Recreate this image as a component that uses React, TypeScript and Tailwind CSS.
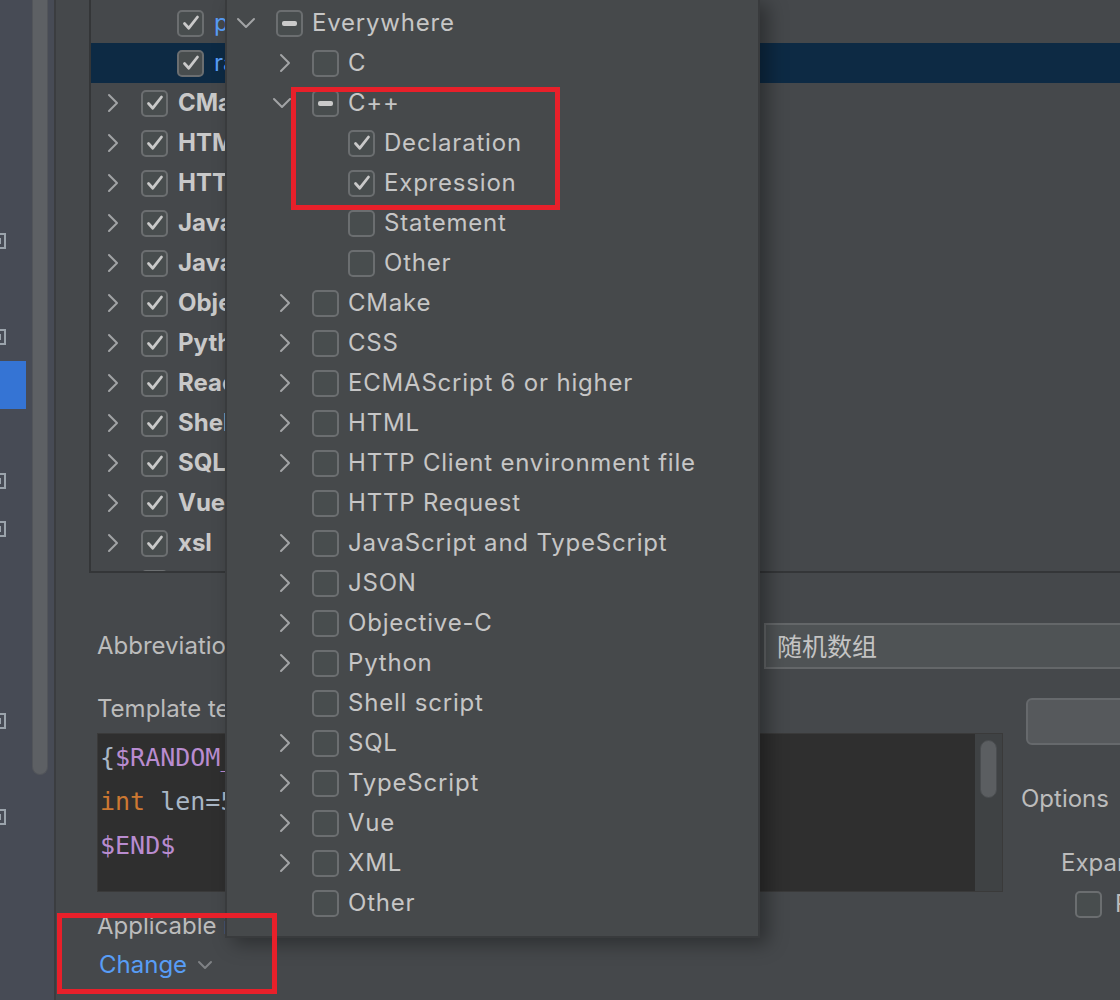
import React from "react";

type Check = "on" | "off" | "mixed";

interface PopupRow {
  label: string;
  level: number;
  arrow?: "right" | "down";
  state: Check;
}

const popupRows: PopupRow[] = [
  { label: "Everywhere", level: 0, arrow: "down", state: "mixed" },
  { label: "C", level: 1, arrow: "right", state: "off" },
  { label: "C++", level: 1, arrow: "down", state: "mixed" },
  { label: "Declaration", level: 2, state: "on" },
  { label: "Expression", level: 2, state: "on" },
  { label: "Statement", level: 2, state: "off" },
  { label: "Other", level: 2, state: "off" },
  { label: "CMake", level: 1, arrow: "right", state: "off" },
  { label: "CSS", level: 1, arrow: "right", state: "off" },
  { label: "ECMAScript 6 or higher", level: 1, arrow: "right", state: "off" },
  { label: "HTML", level: 1, arrow: "right", state: "off" },
  { label: "HTTP Client environment file", level: 1, arrow: "right", state: "off" },
  { label: "HTTP Request", level: 1, state: "off" },
  { label: "JavaScript and TypeScript", level: 1, arrow: "right", state: "off" },
  { label: "JSON", level: 1, arrow: "right", state: "off" },
  { label: "Objective-C", level: 1, arrow: "right", state: "off" },
  { label: "Python", level: 1, arrow: "right", state: "off" },
  { label: "Shell script", level: 1, state: "off" },
  { label: "SQL", level: 1, arrow: "right", state: "off" },
  { label: "TypeScript", level: 1, arrow: "right", state: "off" },
  { label: "Vue", level: 1, arrow: "right", state: "off" },
  { label: "XML", level: 1, arrow: "right", state: "off" },
  { label: "Other", level: 1, state: "off" },
];

const groups = [
  "CMake",
  "HTML",
  "HTTP Request",
  "JavaScript",
  "Java",
  "Objective-C",
  "Python",
  "React",
  "Shell Script",
  "SQL",
  "Vue",
  "xsl",
  "Zen CSS",
];

const sideIcons = [5, 7, 10, 11, 15, 17];

function ChevronRight() {
  return (
    <svg width="12" height="20" viewBox="0 0 12 20" fill="none">
      <path d="M2 2l8 8-8 8" stroke="#a2a4a6" strokeWidth="2" strokeLinecap="round" strokeLinejoin="round" />
    </svg>
  );
}

function ChevronDown() {
  return (
    <svg width="20" height="12" viewBox="0 0 20 12" fill="none">
      <path d="M2 2l8 8 8-8" stroke="#a2a4a6" strokeWidth="2" strokeLinecap="round" strokeLinejoin="round" />
    </svg>
  );
}

function Checkbox({ state }: { state: Check }) {
  return (
    <div className="w-[27px] h-[27px] shrink-0 rounded-[5px] border-2 border-[#6b6e70] bg-[#484d4e] flex items-center justify-center">
      {state === "on" && (
        <svg width="20" height="20" viewBox="0 0 20 20" fill="none">
          <path d="M3.5 10.5l4.3 4.7L16.5 4" stroke="#c9c9c9" strokeWidth="2.8" strokeLinecap="round" strokeLinejoin="round" />
        </svg>
      )}
      {state === "mixed" && <div className="w-[15px] h-[5px] rounded-[2px] bg-[#cacaca]" />}
    </div>
  );
}

function SideBar() {
  return (
    <div className="w-[56px] h-full shrink-0 flex bg-[#474b55] border-r-2 border-[#3b3d40]">
      <div className="w-[32px] flex flex-col -mt-[23px]">
        {Array.from({ length: 21 }).map((_, i) => (
          <div
            key={i}
            className={
              i === 8
                ? "h-[48px] w-[26px] shrink-0 bg-[#3574d4]"
                : "h-[48px] shrink-0 flex items-center"
            }
          >
            {sideIcons.includes(i) && (
              <div className="w-[16px] h-[16px] -ml-[10px] border-2 border-[#9ba3ab] flex items-center justify-center">
                <div className="w-[6px] h-[6px] bg-[#9ba3ab]" />
              </div>
            )}
          </div>
        ))}
      </div>
      <div className="w-[16px] h-[775px] rounded-b-full bg-[#5d6064] border-b border-x border-[#52555a]" />
    </div>
  );
}

function TreeBox() {
  return (
    <div className="ml-[33px] h-[573px] border-l-2 border-b-2 border-[#343638] pt-[3px] overflow-hidden font-['Inter',sans-serif] text-[24px]">
      <div className="h-[40px] flex items-center pl-[86px] gap-[10px]">
        <Checkbox state="on" />
        <span className="text-[#589df6]">p</span>
      </div>
      <div className="h-[40px] flex items-center pl-[86px] gap-[10px] bg-[#0d2a44]">
        <Checkbox state="on" />
        <span className="text-[#589df6]">ra</span>
      </div>
      {groups.map((g) => (
        <div key={g} className="h-[40px] flex items-center pl-[16px]">
          <ChevronRight />
          <div className="ml-[22px]">
            <Checkbox state="on" />
          </div>
          <span className="ml-[10px] font-bold text-[#c9c9c9]">{g}</span>
        </div>
      ))}
    </div>
  );
}

function Popup() {
  return (
    <div className="absolute left-[225px] -top-[2px] w-[535px] h-[940px] bg-[#46494b] border-2 border-[#393b3d] shadow-[8px_6px_18px_rgba(0,0,0,0.35)] pt-[3px] font-['Inter',sans-serif] text-[24px] text-[#c6c6c6] tracking-[0.8px]">
      {popupRows.map((r, i) => (
        <div key={i} className="h-[40px] flex items-center" style={{ paddingLeft: 9 + r.level * 36 }}>
          <div className="w-[40px] flex items-center justify-start">
            {r.arrow === "right" && <div className="ml-[7px]"><ChevronRight /></div>}
            {r.arrow === "down" && <ChevronDown />}
          </div>
          <Checkbox state={r.state} />
          <span className="ml-[9px] whitespace-nowrap">{r.label}</span>
        </div>
      ))}
    </div>
  );
}

function Editor() {
  return (
    <div className="h-[159px] w-[906px] flex bg-[#2f2f2f] border border-[#3a3a3a]">
      <div className="flex-1 pl-[2px] pt-[2px] font-['DejaVu_Sans_Mono',monospace] text-[25px] leading-[44px] text-[#a9b7c6]">
        <div>
          {"{"}
          <span className="text-[#b98cd0]">$RANDOM_ARRAY$</span>
          {"}"}
        </div>
        <div>
          <span className="text-[#cc7832]">int</span> len=5;
        </div>
        <div className="text-[#b98cd0]">$END$</div>
      </div>
      <div className="w-[27px] bg-[#3f4244] pt-[6px] flex justify-center">
        <div className="w-[17px] h-[58px] rounded-full bg-[#5b5e61] border border-[#4a4d50]" />
      </div>
    </div>
  );
}

export default function App() {
  return (
    <div className="relative w-[1120px] h-[1000px] overflow-hidden flex bg-[#45484b]">
      <SideBar />
      <div className="flex-1 min-w-0 overflow-hidden font-['Inter',sans-serif] text-[24px] text-[#bcbcbc]">
        <TreeBox />
        <div className="pl-[41px] pt-[50px]">
          <div className="flex items-center h-[46px]">
            <span className="w-[667px] shrink-0">Abbreviation:</span>
            <div className="h-[46px] w-[500px] shrink-0 bg-[#4f5355] border-2 border-[#646769] flex items-center pl-[11px] font-['Noto_Sans_CJK_SC',sans-serif] text-[25px] text-[#c4c4c4]">
              随机数组
            </div>
          </div>
          <div className="flex">
            <div className="w-[906px] shrink-0">
              <div className="h-[24px] leading-[24px] mt-[28px]">Template text:</div>
              <div className="mt-[12px]">
                <Editor />
              </div>
              <div className="h-[24px] leading-[24px] mt-[22px]">Applicable in C++.</div>
              <div className="h-[24px] leading-[24px] mt-[15px] flex items-center gap-[10px] pl-[2px]">
                <span className="text-[#589df6]">Change</span>
                <svg width="16" height="10" viewBox="0 0 16 10" fill="none">
                  <path d="M2 2l6 6 6-6" stroke="#7f8285" strokeWidth="2" strokeLinecap="round" strokeLinejoin="round" />
                </svg>
              </div>
            </div>
            <div className="shrink-0 w-[300px]">
              <div className="mt-[29px] ml-[23px] h-[47px] w-[200px] rounded-[6px] bg-[#56595c] border-2 border-[#66696c]" />
              <div className="ml-[18px] mt-[42px] h-[24px] leading-[24px] whitespace-nowrap">Options</div>
              <div className="ml-[58px] mt-[40px] h-[24px] leading-[24px] whitespace-nowrap">Expand with</div>
              <div className="ml-[72px] mt-[11px] flex items-center gap-[13px] whitespace-nowrap">
                <Checkbox state="off" />
                <span>Reformat</span>
              </div>
            </div>
          </div>
        </div>
      </div>
      <Popup />
      <div className="absolute left-[291px] top-[87px] w-[269px] h-[123px] border-[5px] border-[#e8202a]" />
      <div className="absolute left-[57px] top-[913px] w-[220px] h-[81px] border-[5px] border-[#e8202a]" />
    </div>
  );
}
